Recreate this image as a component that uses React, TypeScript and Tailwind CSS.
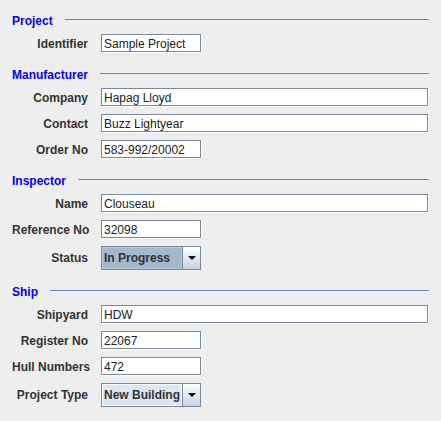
import type { ReactNode } from 'react';

type FieldProps = { label: string; value: string; wide?: boolean };
type ComboProps = { label: string; value: string; active?: boolean };

function Row({ label, children }: { label: string; children: ReactNode }) {
  return (
    <div className="flex h-[19px] items-start">
      <div className="w-[76px] shrink-0 whitespace-nowrap pt-px text-right text-[12px] font-bold leading-[19px] text-[#333333]">
        {label}
      </div>
      <div className="ml-[13px] flex flex-1">{children}</div>
    </div>
  );
}

function Field({ label, value, wide }: FieldProps) {
  return (
    <Row label={label}>
      <div
        className={`h-[18px] border border-[#7a8a99] bg-white pl-[2px] pt-px text-[12px] leading-[16px] text-[#222222] shadow-[1px_1px_0_#ffffff] ${
          wide ? 'w-[327px]' : 'w-[100px]'
        }`}
      >
        {value}
      </div>
    </Row>
  );
}

function Combo({ label, value, active }: ComboProps) {
  return (
    <div className="flex h-[24px] items-start">
      <div className="w-[76px] shrink-0 whitespace-nowrap pt-[3px] text-right text-[12px] font-bold leading-[19px] text-[#333333]">
        {label}
      </div>
      <div className="ml-[13px] flex h-[24px] w-[100px] border border-[#7a8a99]">
        <div
          className={`flex-1 border pl-px text-[12px] font-bold leading-[21px] text-[#333333] ${
            active ? 'border-[#b4c5d6] bg-[#a3b8cc]' : 'border-white bg-[#dde7f1]'
          }`}
        >
          {value}
        </div>
        <div className="flex w-[18px] items-center justify-center border-l border-[#7a8a99] bg-gradient-to-b from-white to-[#c3d3e3]">
          <svg width="8" height="4" viewBox="0 0 8 4">
            <path d="M0 0h8L4 4z" fill="#000000" />
          </svg>
        </div>
      </div>
    </div>
  );
}

function Section({ title, line, first, children }: { title: string; line: string; first?: boolean; children: ReactNode }) {
  return (
    <div className={first ? '' : 'mt-[15px]'}>
      <div className="flex h-[14px] items-start">
        <span className="text-[12px] font-bold leading-[14px] text-[#0000ff]">{title}</span>
        <div className={`ml-3 mt-[5px] h-px flex-1 ${line}`} />
      </div>
      <div className="mt-[6px] flex flex-col gap-[7px]">{children}</div>
    </div>
  );
}

export default function App() {
  return (
    <div className="h-[421px] w-[441px] overflow-hidden bg-[#eeeeee] px-3 pt-[14px] font-['Liberation_Sans',Arial,sans-serif]">
      <Section title="Project" line="bg-[#6f87b5]" first>
        <Field label="Identifier" value="Sample Project" />
      </Section>

      <Section title="Manufacturer" line="bg-[#6f87b5]">
        <Field label="Company" value="Hapag Lloyd" wide />
        <Field label="Contact" value="Buzz Lightyear" wide />
        <Field label="Order No" value="583-992/20002" />
      </Section>

      <Section title="Inspector" line="bg-[#6f87b5]">
        <Field label="Name" value="Clouseau" wide />
        <Field label="Reference No" value="32098" />
        <Combo label="Status" value="In Progress" active />
      </Section>

      <Section title="Ship" line="bg-[#6386d0]">
        <Field label="Shipyard" value="HDW" wide />
        <Field label="Register No" value="22067" />
        <Field label="Hull Numbers" value="472" />
        <Combo label="Project Type" value="New Building" />
      </Section>
    </div>
  );
}
